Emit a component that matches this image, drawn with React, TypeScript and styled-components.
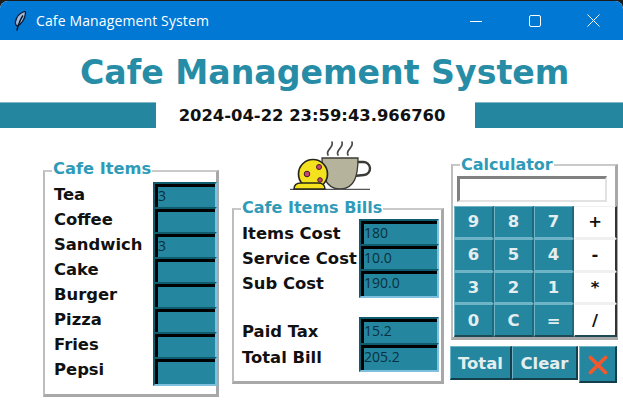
import React from "react";
import styled, { createGlobalStyle } from "styled-components";

const Global = createGlobalStyle`
  html, body { margin: 0; padding: 0; background: #1c1c1c; }
  #root { width: 623px; height: 412px; overflow: hidden; }
`;

const Bold = `"DejaVu Sans", Verdana, sans-serif`;
const TEAL = "#24879f";

const Window = styled.div`
  width: 623px;
  height: 411px;
  margin-top: 1px;
  background: #ffffff;
  border-radius: 8px 8px 0 0;
  overflow: hidden;
`;
const TitleBar = styled.div`
  height: 39px;
  background: #0078d4;
  display: flex;
  align-items: center;
  padding-left: 14px;
  color: #fff;
  font: 14px "Open Sans", "Noto Sans", sans-serif;
`;
const TitleText = styled.span`
  margin-left: 8px;
  flex: 1;
  font-size: 14px;
  letter-spacing: 0.13px;
`;
const WinButton = styled.div`
  width: 59px;
  height: 39px;
  display: flex;
  align-items: center;
  justify-content: center;
`;
const Heading = styled.h1`
  margin: 0;
  box-sizing: border-box;
  height: 61px;
  padding: 3px 0 0 80px;
  display: flex;
  align-items: center;
  font: bold 33.2px ${Bold};
  color: #278da6;
  white-space: nowrap;
`;
const ClockRow = styled.div`
  display: flex;
  height: 26px;
  margin-top: 1px;
  align-items: center;
`;
const Bar = styled.div<{ $w: number }>`
  width: ${(p) => p.$w}px;
  height: 26px;
  background: ${TEAL};
  border-top: 1px solid #7fb9c6;
  box-sizing: border-box;
`;
const Clock = styled.div`
  flex: 1;
  padding: 1px 7px 0 0;
  text-align: center;
  font: bold 16.4px ${Bold};
  color: #111;
`;
const Main = styled.div`
  display: flex;
  align-items: flex-start;
  padding-left: 43px;
`;
const Frame = styled.section<{ $w: number; $h: number }>`
  position: relative;
  box-sizing: border-box;
  width: ${(p) => p.$w}px;
  height: ${(p) => p.$h}px;
  border-style: solid;
  border-width: 2px 3px 3px 2px;
  border-color: #c9c9c9 #a8a8a8 #a8a8a8 #bdbdbd;
  background: #fff;
`;
const Legend = styled.div<{ $size: number; $top: number }>`
  position: absolute;
  left: 7px;
  top: ${(p) => p.$top}px;
  padding: 0 1px;
  background: #fff;
  font: bold ${(p) => p.$size}px ${Bold};
  color: #2f9bb8;
  white-space: nowrap;
`;
const ItemsColumn = styled.div`
  margin-top: 42px;
`;
const ItemsBody = styled.div`
  padding: 10px 0 0 9px;
`;
const Row = styled.div<{ $label: number; $h?: number; $gap?: number }>`
  display: grid;
  grid-template-columns: ${(p) => p.$label}px auto;
  height: ${(p) => p.$h ?? 25}px;
  margin-top: ${(p) => p.$gap ?? 0}px;
`;
const Label = styled.div<{ $lh: number }>`
  font: bold 16.4px/${(p) => p.$lh}px ${Bold};
  color: #111;
  white-space: nowrap;
`;
const Entry = styled.div<{ $w: number }>`
  position: relative;
  box-sizing: border-box;
  width: ${(p) => p.$w}px;
  height: 29px;
  border-style: solid;
  border-width: 2px;
  border-color: #0f5c6e #7fc0de #7fc0de #0f5c6e;
  background: ${TEAL};
  box-shadow: inset 3px 3px 0 #000;
  padding: 0 0 0 3px;
  font: 14px/24px "Open Sans", "Noto Sans", sans-serif;
  color: #0a3040;
`;
const BillsColumn = styled.div`
  margin-left: 13px;
  width: 212px;
`;
const CupBox = styled.div`
  height: 80px;
  padding: 12px 0 0 58px;
  box-sizing: border-box;
`;
const BillsBody = styled.div`
  padding: 9px 0 0 8px;
`;
const CalcColumn = styled.div`
  margin-left: 7px;
  margin-top: 36px;
  width: 168px;
`;
const Display = styled.div`
  box-sizing: border-box;
  width: 150px;
  height: 26px;
  margin: 10px 0 4px 4px;
  background: #fff;
  border-style: solid;
  border-width: 3px 2px 2px 3px;
  border-color: #808080 #e2e2e2 #e2e2e2 #808080;
`;
const KeyGrid = styled.div`
  display: grid;
  grid-template-columns: repeat(3, 40px) 43px;
  grid-auto-rows: 32.75px;
  margin-left: 1px;
  width: 163px;
`;
const Key = styled.div<{ $op?: boolean }>`
  display: flex;
  align-items: center;
  justify-content: center;
  box-sizing: border-box;
  font: bold 16.4px ${Bold};
  background: ${(p) => (p.$op ? "#fff" : TEAL)};
  color: ${(p) => (p.$op ? "#111" : "#e4eef0")};
  border-style: solid;
  border-width: 1px 2px 2px 1px;
  border-color: ${(p) =>
    p.$op
      ? "#f0f0f0 #333 #f0f0f0 #fff"
      : "#6fb4c6 #1c6a7d #6fb4c6 #6fb4c6"};
  &:nth-last-child(-n + 4) {
    border-bottom-color: #1d4a55;
  }
`;
const ActionRow = styled.div`
  display: flex;
  margin: 6px 0 0 -1px;
`;
const Action = styled.div<{ $w: number; $h?: number; $ml?: number }>`
  display: flex;
  align-items: center;
  justify-content: center;
  box-sizing: border-box;
  width: ${(p) => p.$w}px;
  height: ${(p) => p.$h ?? 34}px;
  margin-left: ${(p) => p.$ml ?? 0}px;
  padding-top: 2px;
  background: ${TEAL};
  color: #e4eef0;
  font: bold 16.4px ${Bold};
  border-style: solid;
  border-width: 1px 2px 2px 1px;
  border-color: #6fb4c6 #123f4b #123f4b #6fb4c6;
`;

const Feather = () => (
  <svg width="14" height="20" viewBox="0 0 14 20">
    <path d="M10.500 .5C6 2 2.500 6 1.500 10.500c-.4 2 0 3.500 1.500 4.500C7 13.500 11 8.500 11.500 2c0-1-.3-1.500-1-1.500z" fill="#9fbbe0" stroke="#101c30" strokeWidth="1.300" />
    <path d="M9 4.500C6.500 8 4.500 13 2.800 19.500" stroke="#0a1424" strokeWidth="1.400" fill="none" />
  </svg>
);

const Minimize = () => (
  <svg width="12" height="12" viewBox="0 0 12 12"><path d="M0 6.500h12" stroke="#fff" strokeWidth="1" /></svg>
);
const Maximize = () => (
  <svg width="12" height="12" viewBox="0 0 12 12"><rect x=".5" y=".5" width="11" height="11" rx="1.500" fill="none" stroke="#fff" /></svg>
);
const CloseIcon = () => (
  <svg width="13" height="13" viewBox="0 0 13 13"><path d="M.5.5l12 12M12.500.5l-12 12" stroke="#fff" strokeWidth="1" /></svg>
);

const CupIcon = () => (
  <svg width="82" height="50" viewBox="0 0 82 50">
    <g fill="none" stroke="#4a4a4a" strokeWidth="1.700" strokeLinecap="round">
      <path d="M38 15c-3-5 6-7 4-13" />
      <path d="M48 15c-3-5 6-7 4-13" />
      <path d="M58 15c-3-5 6-7 4-13" />
    </g>
    <path d="M67 22h6a6 6 0 0 1 1 13l-10 1" fill="none" stroke="#3a3a36" strokeWidth="2.400" />
    <path d="M32 18h36c0 17-3 31-18 31S32 35 32 18z" fill="#b5b39c" stroke="#3a3a36" strokeWidth="1.300" />
    <path d="M0 49.300h80" stroke="#555" strokeWidth="1.200" />
    <circle cx="23" cy="34" r="14.500" fill="#f5e21e" stroke="#26261a" strokeWidth="1.700" />
    <path d="M4 49c0-4 3-6 7-6h17c5 0 7 3 7 6z" fill="#f5e21e" stroke="#26261a" strokeWidth="1.500" />
    <circle cx="29" cy="27" r="2.500" fill="#d0427c" stroke="#3a2020" />
    <circle cx="17" cy="34" r="2.800" fill="#d0427c" stroke="#3a2020" />
    <circle cx="30" cy="40" r="2.300" fill="#d0427c" stroke="#3a2020" />
  </svg>
);

const XIcon = () => (
  <svg width="20" height="20" viewBox="0 0 20 20">
    <path d="M2.500 2.500l15 15M17.500 2.500l-15 15" stroke="#f0592e" strokeWidth="3.800" strokeLinecap="round" />
  </svg>
);

const items: [string, string][] = [
  ["Tea", "3"],
  ["Coffee", ""],
  ["Sandwich", "3"],
  ["Cake", ""],
  ["Burger", ""],
  ["Pizza", ""],
  ["Fries", ""],
  ["Pepsi", ""],
];

const bills: [string, string, number, number][] = [
  ["Items Cost", "180", 25, 0],
  ["Service Cost", "10.0", 25, 0],
  ["Sub Cost", "190.0", 25, 0],
  ["Paid Tax", "15.2", 26, 23],
  ["Total Bill", "205.2", 25, 0],
];

const keys: [string, boolean][] = [
  ["9", false], ["8", false], ["7", false], ["+", true],
  ["6", false], ["5", false], ["4", false], ["-", true],
  ["3", false], ["2", false], ["1", false], ["*", true],
  ["0", false], ["C", false], ["=", false], ["/", true],
];

export default function App() {
  return (
    <Window>
      <Global />
      <TitleBar>
        <Feather />
        <TitleText>Cafe Management System</TitleText>
        <WinButton><Minimize /></WinButton>
        <WinButton><Maximize /></WinButton>
        <WinButton><CloseIcon /></WinButton>
      </TitleBar>
      <Heading>Cafe Management System</Heading>
      <ClockRow>
        <Bar $w={156} />
        <Clock>2024-04-22 23:59:43.966760</Clock>
        <Bar $w={148} />
      </ClockRow>
      <Main>
        <ItemsColumn>
          <Frame $w={176} $h={227}>
            <Legend $size={16.3} $top={-13}>Cafe Items</Legend>
            <ItemsBody>
              {items.map(([name, value]) => (
                <Row key={name} $label={99}>
                  <Label $lh={26}>{name}</Label>
                  <Entry $w={64}>{value}</Entry>
                </Row>
              ))}
            </ItemsBody>
          </Frame>
        </ItemsColumn>
        <BillsColumn>
          <CupBox><CupIcon /></CupBox>
          <Frame $w={212} $h={176}>
            <Legend $size={16} $top={-12}>Cafe Items Bills</Legend>
            <BillsBody>
              {bills.map(([name, value, h, gap]) => (
                <Row key={name} $label={117} $h={h} $gap={gap}>
                  <Label $lh={29}>{name}</Label>
                  <Entry $w={80}>{value}</Entry>
                </Row>
              ))}
            </BillsBody>
          </Frame>
        </BillsColumn>
        <CalcColumn>
          <Frame $w={167} $h={176}>
            <Legend $size={16} $top={-11}>Calculator</Legend>
            <Display />
            <KeyGrid>
              {keys.map(([k, op]) => (
                <Key key={k} $op={op}>{k}</Key>
              ))}
            </KeyGrid>
          </Frame>
          <ActionRow>
            <Action $w={62}>Total</Action>
            <Action $w={66}>Clear</Action>
            <Action $w={38} $h={37} $ml={1}><XIcon /></Action>
          </ActionRow>
        </CalcColumn>
      </Main>
    </Window>
  );
}
